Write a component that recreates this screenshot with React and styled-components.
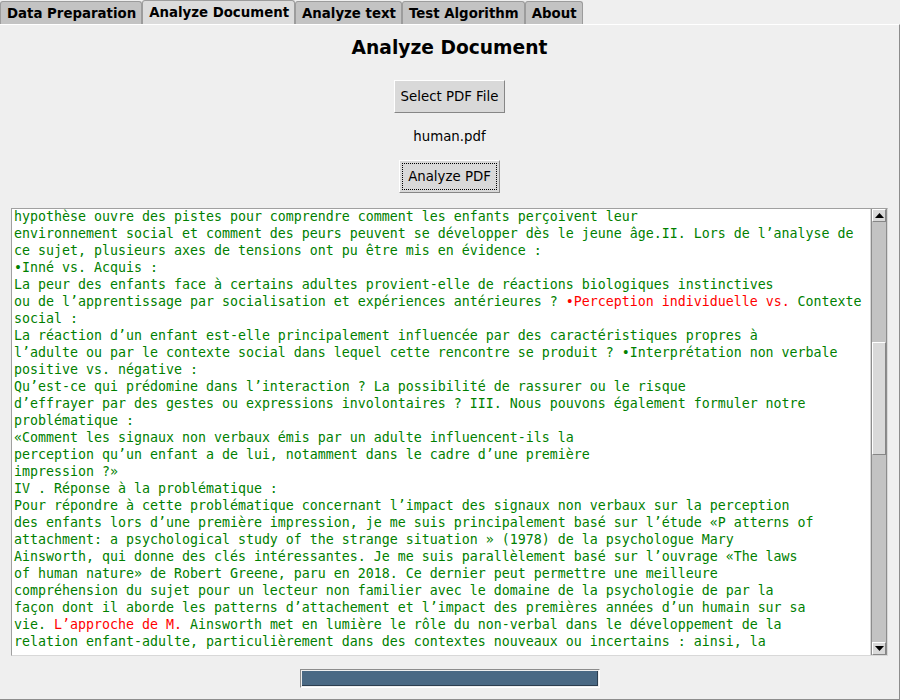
import React from 'react'
import styled, { createGlobalStyle } from 'styled-components';

const GlobalStyle = createGlobalStyle`
    html, body {
        margin: 0;
        padding: 0;
        background: #efefef;
        font-family: "DejaVu Sans", sans-serif;
    }
`;

const tabs = ['Data Preparation', 'Analyze Document', 'Analyze text', 'Test Algorithm', 'About'];

// each line is a list of [text, red?] pieces
const lines = [
    [['hypothèse ouvre des pistes pour comprendre comment les enfants perçoivent leur']],
    [['environnement social et comment des peurs peuvent se développer dès le jeune âge.II. Lors de l’analyse de']],
    [['ce sujet, plusieurs axes de tensions ont pu être mis en évidence :']],
    [['•Inné vs. Acquis :']],
    [['La peur des enfants face à certains adultes provient-elle de réactions biologiques instinctives']],
    [['ou de l’apprentissage par socialisation et expériences antérieures ? '], ['•Perception individuelle vs.', true], [' Contexte']],
    [['social :']],
    [['La réaction d’un enfant est-elle principalement influencée par des caractéristiques propres à']],
    [['l’adulte ou par le contexte social dans lequel cette rencontre se produit ? •Interprétation non verbale']],
    [['positive vs. négative :']],
    [['Qu’est-ce qui prédomine dans l’interaction ? La possibilité de rassurer ou le risque']],
    [['d’effrayer par des gestes ou expressions involontaires ? III. Nous pouvons également formuler notre']],
    [['problématique :']],
    [['«Comment les signaux non verbaux émis par un adulte influencent-ils la']],
    [['perception qu’un enfant a de lui, notamment dans le cadre d’une première']],
    [['impression ?»']],
    [['IV . Réponse à la problématique :']],
    [['Pour répondre à cette problématique concernant l’impact des signaux non verbaux sur la perception']],
    [['des enfants lors d’une première impression, je me suis principalement basé sur l’étude «P atterns of']],
    [['attachment: a psychological study of the strange situation » (1978) de la psychologue Mary']],
    [['Ainsworth, qui donne des clés intéressantes. Je me suis parallèlement basé sur l’ouvrage «The laws']],
    [['of human nature» de Robert Greene, paru en 2018. Ce dernier peut permettre une meilleure']],
    [['compréhension du sujet pour un lecteur non familier avec le domaine de la psychologie de par la']],
    [['façon dont il aborde les patterns d’attachement et l’impact des premières années d’un humain sur sa']],
    [['vie. '], ['L’approche de M.', true], [' Ainsworth met en lumière le rôle du non-verbal dans le développement de la']],
    [['relation enfant-adulte, particulièrement dans des contextes nouveaux ou incertains : ainsi, la']],
];

const Arrow = ({ down }) => (
    <svg width="9" height="5" viewBox="0 0 9 5">
        <polygon points={down ? '0,0 9,0 4.5,5' : '0,5 9,5 4.5,0'} fill="#000" />
    </svg>
);

export default function App() {
    return (
        <Window>
            <GlobalStyle />
            <TabBar>
                {tabs.map(t => (
                    <Tab key={t} active={t === 'Analyze Document'}>{t}</Tab>
                ))}
            </TabBar>
            <Panel>
                <Title>Analyze Document</Title>
                <Button>Select PDF File</Button>
                <FileLabel>human.pdf</FileLabel>
                <Button focused>
                    <FocusRing>Analyze PDF</FocusRing>
                </Button>
                <TextBox>
                    <TextArea>
                        <TextContent>
                            {lines.map((line, i) => (
                                <Line key={i}>
                                    {line.map(([txt, red], j) => (
                                        <Piece key={j} red={red}>{txt}</Piece>
                                    ))}
                                </Line>
                            ))}
                        </TextContent>
                    </TextArea>
                    <Scrollbar>
                        <ArrowButton><Arrow /></ArrowButton>
                        <Track>
                            <Thumb />
                        </Track>
                        <ArrowButton><Arrow down /></ArrowButton>
                    </Scrollbar>
                </TextBox>
                <Progress>
                    <ProgressFill />
                </Progress>
            </Panel>
        </Window>
    )
}

const Window = styled.div`
    width: 900px;
    height: 700px;
    display: flex;
    flex-direction: column;
    background: #efefef;
    overflow: hidden;
`;

const TabBar = styled.div`
    display: flex;
    align-items: flex-end;
    height: 24px;
`;

const Tab = styled.div`
    height: ${p => (p.active ? '24px' : '23px')};
    box-sizing: border-box;
    padding: 0 5px 0 6px;
    display: flex;
    align-items: center;
    font-weight: bold;
    font-size: 13.33px;
    color: #000;
    background: ${p => (p.active ? '#dcdcdc' : '#c3c3c3')};
    border: 1px solid #9c9c9c;
    border-bottom: none;
    border-radius: 3px 3px 0 0;
    white-space: nowrap;
`;

const Panel = styled.div`
    flex: 1;
    display: flex;
    flex-direction: column;
    align-items: center;
    border-top: 1px solid #ffffff;
    border-right: 1px solid #8c8c8c;
    border-bottom: 1px solid #8c8c8c;
`;

const Title = styled.div`
    margin-top: 12px;
    font-size: 18.67px;
    font-weight: bold;
    line-height: 22px;
    color: #000;
`;

const Button = styled.div`
    margin-top: ${p => (p.focused ? '15px' : '21px')};
    height: 33px;
    box-sizing: border-box;
    padding: ${p => (p.focused ? '2px' : '0 6px')};
    display: flex;
    align-items: center;
    justify-content: center;
    background: #d9d9d9;
    border-top: 1px solid #ffffff;
    border-left: 1px solid #ffffff;
    border-right: 1px solid #868686;
    border-bottom: 1px solid #868686;
    font-size: 13.33px;
    color: #000;
`;

const FocusRing = styled.div`
    height: 100%;
    box-sizing: border-box;
    padding: 0 5px;
    display: flex;
    align-items: center;
    border: 1px dotted #000;
`;

const FileLabel = styled.div`
    margin-top: 16px;
    font-size: 13.33px;
    line-height: 16px;
    color: #000;
`;

const TextBox = styled.div`
    margin-top: 15px;
    width: 877px;
    height: 448px;
    box-sizing: border-box;
    display: flex;
    border: 1px solid #a0a0a0;
    border-bottom-color: #d8d8d8;
    border-right-color: #d8d8d8;
    background: #fff;
`;

const TextArea = styled.div`
    flex: 1;
    overflow: hidden;
    padding-left: 2px;
    border-right: 1px solid #d8d8d8;
`;

const TextContent = styled.div`
    margin-top: -1px;
    font-family: "DejaVu Sans Mono", monospace;
    font-size: 13.29px;
    line-height: 17px;
    color: #008000;
`;

const Line = styled.div`
    white-space: pre;
`;

const Piece = styled.span`
    color: ${p => (p.red ? '#ff0000' : '#008000')};
`;

const Scrollbar = styled.div`
    width: 14px;
    display: flex;
    flex-direction: column;
    background: #c3c3c3;
    border-left: 1px solid #8c8c8c;
    border-right: 1px solid #8c8c8c;
`;

const ArrowButton = styled.div`
    height: 13px;
    display: flex;
    align-items: center;
    justify-content: center;
    background: #d9d9d9;
    border-top: 1px solid #ffffff;
    border-left: 1px solid #ffffff;
    border-right: 1px solid #868686;
    border-bottom: 1px solid #868686;
    box-sizing: border-box;
`;

const Track = styled.div`
    flex: 1;
    padding-top: 120px;
`;

const Thumb = styled.div`
    height: 113px;
    box-sizing: border-box;
    background: #d9d9d9;
    border-top: 1px solid #ffffff;
    border-left: 1px solid #ffffff;
    border-right: 1px solid #868686;
    border-bottom: 1px solid #868686;
`;

const Progress = styled.div`
    margin-top: 13px;
    width: 300px;
    height: 19px;
    box-sizing: border-box;
    padding: 1px;
    border-top: 1px solid #8c8c8c;
    border-left: 1px solid #8c8c8c;
    border-right: 1px solid #ffffff;
    border-bottom: 1px solid #ffffff;
    background: #efefef;
`;

const ProgressFill = styled.div`
    height: 100%;
    box-sizing: border-box;
    background: #4a6984;
    border-right: 1px solid #2c3e50;
    border-bottom: 1px solid #2c3e50;
`;
